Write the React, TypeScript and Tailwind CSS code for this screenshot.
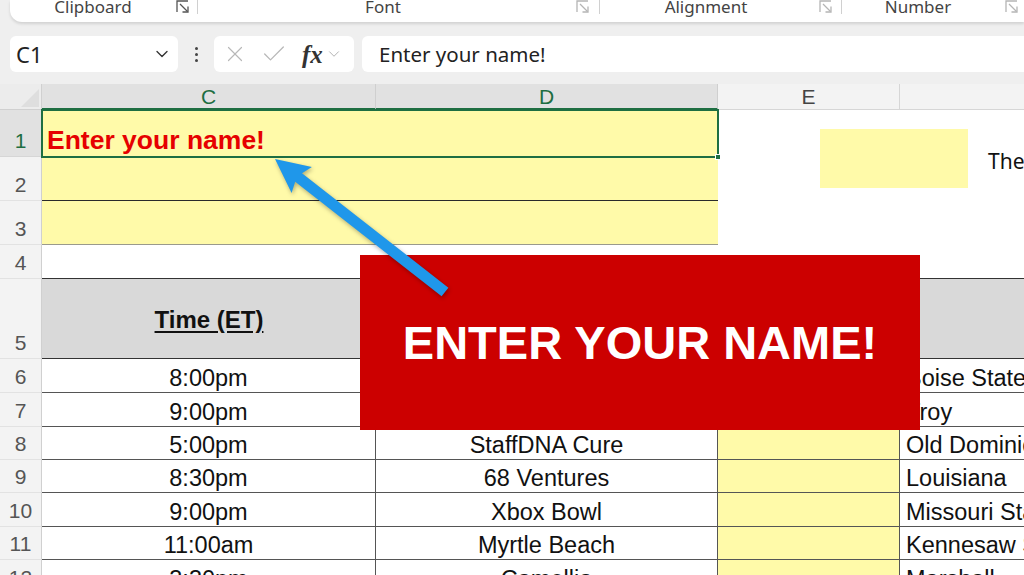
import React from 'react';
import { X, Check, ChevronDown } from 'lucide-react';

const games = [
  { n: 6, h: 'h-[34px]', time: '8:00pm', bowl: '', team: 'Boise State' },
  { n: 7, h: 'h-[34px]', time: '9:00pm', bowl: '', team: 'Troy' },
  { n: 8, h: 'h-[33px]', time: '5:00pm', bowl: 'StaffDNA Cure', team: 'Old Dominion' },
  { n: 9, h: 'h-[33px]', time: '8:30pm', bowl: '68 Ventures', team: 'Louisiana' },
  { n: 10, h: 'h-[34px]', time: '9:00pm', bowl: 'Xbox Bowl', team: 'Missouri State' },
  { n: 11, h: 'h-[33px]', time: '11:00am', bowl: 'Myrtle Beach', team: 'Kennesaw State' },
  { n: 12, h: 'h-[34px]', time: '3:30pm', bowl: 'Camellia', team: 'Marshall' },
];

const Launcher = ({ dark }: { dark?: boolean }) => (
  <svg width="13" height="13" viewBox="0 0 13 13" fill="none" stroke={dark ? '#555' : '#b5b5b5'} strokeWidth="1.3">
    <path d="M1 12V1h11" />
    <path d="M4 4l7.5 7.5" />
    <path d="M12 6.5V12H6.5" />
  </svg>
);

const RowHead = ({ n, selected }: { n: number; selected?: boolean }) => (
  <div
    className={`w-[42px] shrink-0 h-full flex items-end justify-center pb-[1px] leading-[28px] text-[21px] border-r border-b ${
      selected
        ? 'bg-[#e1e1e1] text-[#1e6e42] border-r-[#1e6e42] border-b-[#d6d6d6]'
        : 'bg-[#f3f3f3] text-[#555] border-r-[#d0d0d0] border-b-[#e2e2e2]'
    }`}
  >
    {n}
  </div>
);

export default function App() {
  return (
    <div className="relative w-[1024px] h-[575px] overflow-hidden bg-[#efefef] font-['Liberation_Sans',Arial,sans-serif]">
      {/* ribbon group labels */}
      <div className="ml-[10px] h-[22px] bg-white rounded-bl-[12px] shadow-[0_2px_3px_rgba(0,0,0,0.12)] flex items-start overflow-hidden font-['Noto_Sans',sans-serif] text-[17px] leading-[13px] text-[#444]">
        <div className="w-[166px] text-center">Clipboard</div>
        <div className="w-[18px]"><Launcher dark /></div>
        <div className="w-[4px] h-[14px] border-r border-[#d0d0d0]" />
        <div className="w-[370px] text-center">Font</div>
        <div className="w-[28px] flex justify-center"><Launcher /></div>
        <div className="w-[4px] h-[14px] border-r border-[#d0d0d0]" />
        <div className="w-[212px] text-center">Alignment</div>
        <div className="w-[26px] flex justify-center"><Launcher /></div>
        <div className="w-[4px] h-[14px] border-r border-[#d0d0d0]" />
        <div className="w-[152px] text-center">Number</div>
        <div className="w-[24px] flex justify-end"><Launcher /></div>
      </div>

      {/* formula bar */}
      <div className="mt-[14px] h-[36px] flex items-stretch font-['Noto_Sans',sans-serif]">
        <div className="ml-[10px] w-[168px] bg-white rounded-[6px] flex items-center justify-between pl-[6px] pr-[6px] text-[22px] text-[#222]">
          <span>C1</span>
          <ChevronDown size={20} strokeWidth={1.6} color="#333" />
        </div>
        <div className="w-[36px] flex flex-col items-center justify-center gap-[3px]">
          <span className="w-[3px] h-[3px] rounded-full bg-[#444]" />
          <span className="w-[3px] h-[3px] rounded-full bg-[#444]" />
          <span className="w-[3px] h-[3px] rounded-full bg-[#444]" />
        </div>
        <div className="w-[140px] bg-white rounded-[6px] flex items-center pl-[8px]">
          <X size={26} strokeWidth={1.1} color="#b8b8b8" />
          <Check size={28} strokeWidth={1.1} color="#b8b8b8" className="ml-[12px]" />
          <span className="ml-[14px] font-['Liberation_Serif',serif] italic font-bold text-[25px] text-[#333] leading-none">fx</span>
          <ChevronDown size={18} strokeWidth={1.2} color="#aaa" className="ml-[2px]" />
        </div>
        <div className="ml-[8px] flex-1 bg-white rounded-l-[6px] flex items-center pl-[17px] text-[20.5px] text-[#222]">
          Enter your name!
        </div>
      </div>

      {/* sheet */}
      <div className="mt-[12px] w-[1124px]">
        {/* column headers */}
        <div className="h-[26px] flex text-[21px] leading-[26px]">
          <div className="w-[42px] bg-[#ececec] border-r border-b border-[#d0d0d0] relative overflow-hidden">
            <svg className="absolute right-[2px] bottom-[2px]" width="18" height="18" viewBox="0 0 18 18">
              <polygon points="18,0 18,18 0,18" fill="#dedede" />
            </svg>
          </div>
          <div className="w-[334px] bg-[#e1e1e1] text-[#1e6e42] text-center border-r border-[#cfcfcf] border-b-2 border-b-[#1e6e42]">C</div>
          <div className="w-[342px] bg-[#e1e1e1] text-[#1e6e42] text-center border-r border-[#cfcfcf] border-b-2 border-b-[#1e6e42]">D</div>
          <div className="w-[182px] bg-[#f3f3f3] text-[#444] text-center border-r border-b border-[#d6d6d6]">E</div>
          <div className="w-[224px] bg-[#f3f3f3] border-b border-[#d6d6d6]" />
        </div>

        {/* rows 1-3 */}
        <div className="flex h-[135px] bg-white">
          <div className="w-[42px] flex flex-col">
            <div className="h-[47px]"><RowHead n={1} selected /></div>
            <div className="h-[44px]"><RowHead n={2} /></div>
            <div className="h-[44px]"><RowHead n={3} /></div>
          </div>
          <div className="w-[676px] flex flex-col bg-[#fffaa9]">
            <div className="relative h-[47px] flex items-end pl-[5px] pb-[2px] outline-2 outline-[#1e6e42] -outline-offset-1 text-[26.5px] leading-[30px] font-bold text-[#e60000]">
              Enter your name!
              <span className="absolute -right-[3px] -bottom-[3px] w-[6px] h-[6px] bg-[#1e6e42] border border-white" />
            </div>
            <div className="h-[44px] border-b border-[#2a2a2a]" />
            <div className="h-[44px] border-b border-[#9a9a8c]" />
          </div>
          <div className="flex items-start pl-[102px] pt-[19px]">
            <div className="w-[148px] h-[59px] bg-[#fffaa9]" />
            <span className="ml-[20px] mt-[17px] font-['Noto_Sans',sans-serif] text-[21px] text-[#111]">The</span>
          </div>
        </div>

        {/* row 4 */}
        <div className="flex h-[34px] bg-white">
          <RowHead n={4} />
          <div className="flex-1 border-b border-[#333]" />
        </div>

        {/* row 5 header */}
        <div className="flex h-[80px]">
          <RowHead n={5} />
          <div className="w-[334px] bg-[#d9d9d9] border-b border-[#333] flex items-center justify-center pt-[3px] text-[24px] font-bold underline underline-offset-[3px] text-[#111]">
            Time (ET)
          </div>
          <div className="w-[342px] bg-[#d9d9d9] border-b border-[#333]" />
          <div className="w-[182px] bg-[#d9d9d9] border-b border-[#333]" />
          <div className="w-[224px] bg-[#d9d9d9] border-b border-[#333]" />
        </div>

        {/* game rows */}
        {games.map((g) => (
          <div key={g.n} className={`flex ${g.h} text-[23.5px] leading-[27px] text-[#111]`}>
            <RowHead n={g.n} />
            <div className="w-[334px] bg-white border-b border-r border-[#555] flex items-end justify-center">{g.time}</div>
            <div className="w-[342px] bg-white border-b border-r border-[#555] flex items-end justify-center">{g.bowl}</div>
            <div className="w-[182px] bg-[#fffaa9] border-b border-r border-[#555]" />
            <div className="w-[224px] bg-white border-b border-[#555] flex items-end pl-[6px] whitespace-nowrap">{g.team}</div>
          </div>
        ))}
      </div>

      {/* callout */}
      <div className="absolute left-[360px] top-[255px] w-[560px] h-[175px] bg-[#cc0000] flex items-center justify-center text-white font-bold text-[47px] leading-none">
        ENTER YOUR NAME!
      </div>

      {/* arrow */}
      <svg className="absolute left-0 top-0 pointer-events-none drop-shadow-[1px_2px_2px_rgba(0,0,0,0.3)]" width="1024" height="575" viewBox="0 0 1024 575">
        <polygon
          points="275,159 311.9,167 302,173.2 448.4,287.7 441.6,296.3 295.2,181.8 291.6,192.9"
          fill="#1f97ea"
        />
      </svg>
    </div>
  );
}
